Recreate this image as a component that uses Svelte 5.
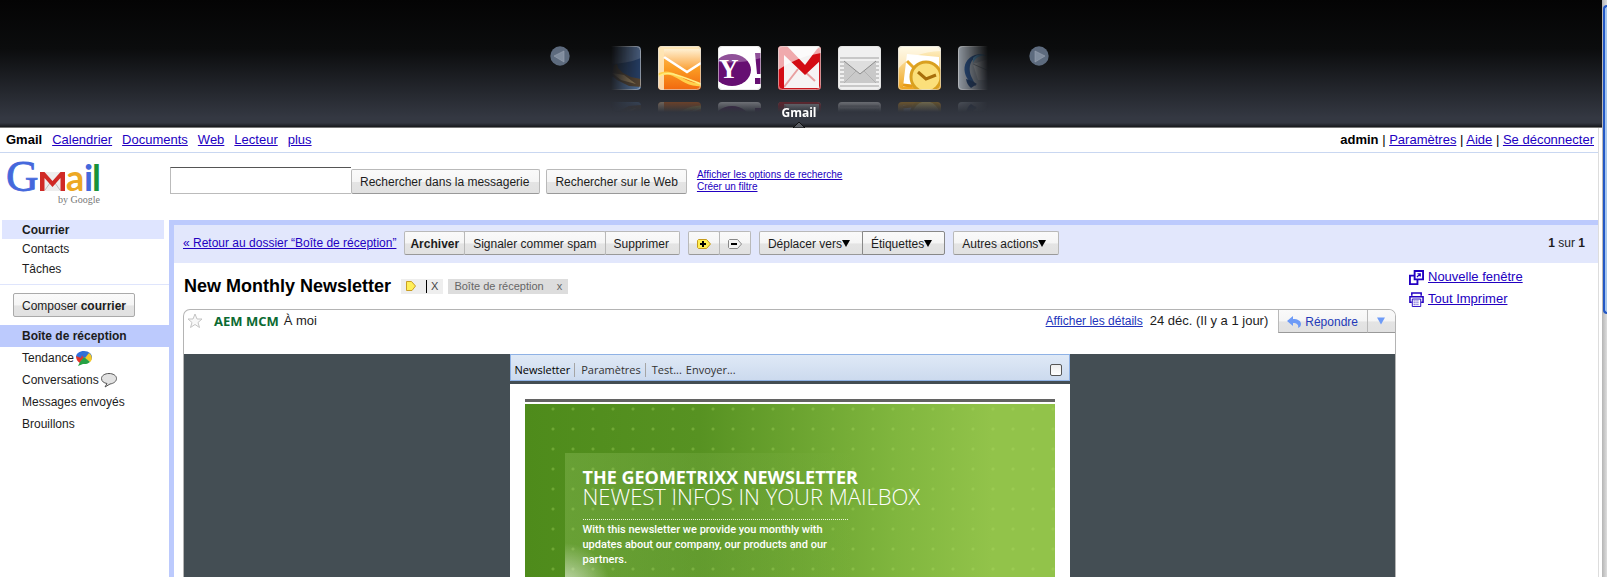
<script>
  const apps = ['photo', 'hotmail', 'yahoo', 'gmail', 'mail', 'outlook', 'bird'];
  const links = ['Calendrier', 'Documents', 'Web', 'Lecteur', 'plus'];
  const folders = [
    { name: 'Tendance', icon: 'buzz' },
    { name: 'Conversations', icon: 'chat' },
    { name: 'Messages envoyés' },
    { name: 'Brouillons' }
  ];
</script>

{#snippet caret()}
  <svg class="caret" viewBox="0 0 8 7" aria-hidden="true"><path d="M0 0h8L4 7z" fill="currentColor" /></svg>
{/snippet}

{#snippet art(name, mirrored)}
  {#if name === 'photo'}
    <rect width="43" height="44" fill="#26416b" />
    <path d="M0 34 20 30 43 37V44H0z" fill="#5478a8" />
    <path d="M3 22 9 24 14 26 16 19 19 18 20 22 25 27 33 31 43 33V41L31 40 19 34 12 28z" fill="#5a4630" />
    <path d="M14 27 26 29 38 38 23 34z" fill="#a3875c" />
    <path d="M0 0H43V12Q24 20 0 17z" fill="#fff" opacity=".18" />
  {:else if name === 'hotmail'}
    <rect width="43" height="44" fill="url(#orange)" />
    <path d="M0 0H43V5L6 8V44H0z" fill="#fff0cc" opacity=".8" />
    <path d="M6 10 29 26 43 17V3H6z" fill="url(#flap)" />
    <path d="M6 11 29 26 43 17" fill="none" stroke="#fff" stroke-width="2.6" />
    <path d="M0 29C10 24 17 29 25 34S37 38 43 39" fill="none" stroke="#ffd04c" stroke-width="3" />
    <path d="M1 30C10 24 20 29 43 38" fill="none" stroke="#ffed83" stroke-width="1.6" />
  {:else if name === 'yahoo'}
    <rect width="43" height="44" fill="#fff" />
    <ellipse cx="14" cy="24" rx="19" ry="16" fill="#660f72" />
    <path d="M37 7h6v21h-4zM37 32h6v6h-6z" fill="#660f72" />
    {#if !mirrored}
      <text x="1" y="32" font-family="Liberation Serif, serif" font-size="27" font-weight="700" fill="#fff">Y</text>
    {/if}
    <path d="M0 0H43V12Q22 18 0 16z" fill="#fff" opacity=".28" />
  {:else if name === 'gmail'}
    <rect width="43" height="44" fill="#f6f3f3" />
    <path d="M6 41 20 23M37 35 25 24" stroke="#e8a0a0" stroke-width="2" />
    <path d="M0 0H9L27 19 39 3 43 0V14L27 29 6 9V44H0z" fill="#d30c14" />
    <path d="M0 42H43V44H0zM41 12 43 8V44H41z" fill="#c9161d" />
    <path d="M0 0H43V7Q18 11 0 24z" fill="#fff" opacity=".65" />
  {:else if name === 'mail'}
    <rect width="43" height="44" fill="#f0f0f0" />
    <path d="M2 12H41M2 16H41M2 20H41M2 24H41M2 28H41M2 32H41M2 36H41M2 40H41" stroke="#c8c8c8" stroke-width="2" />
    <path d="M6 15H38V37H6z" fill="#c9c9c9" />
    <path d="M6 15 22 28 38 15z" fill="#dedede" />
    <path d="M6 15 22 28 38 15" fill="none" stroke="#8c8c8c" />
    <path d="M6 37 18 25M38 37 26 25" stroke="#b2b2b2" />
  {:else if name === 'outlook'}
    <rect width="43" height="44" fill="url(#gold)" />
    <path d="M9 8 41 11V36L5 41z" fill="#fff" />
    <path d="M9 15 16 22" fill="none" stroke="#e8a825" stroke-width="3" />
    <path d="M5 39 14 40" fill="none" stroke="#e69a18" stroke-width="3" />
    <circle cx="28" cy="31" r="15" fill="#fbdf7a" stroke="#d9a020" stroke-width="3" />
    <path d="M20 26 28 33 38 29" fill="none" stroke="#a86f0c" stroke-width="3" />
    <path d="M0 0H43V5Q14 6 0 23z" fill="#fff" opacity=".5" />
  {:else}
    <rect width="43" height="44" fill="#9ba3ac" />
    <path d="M15 18 43 9V34L20 34z" fill="#c4c8cc" />
    <path d="M15 18 31 25 43 10" fill="none" stroke="#7d848d" />
    <path d="M27 8C12 9 9 22 14 32L18 40C1 32 2 6 27 8z" fill="#254b80" />
    <path d="M15 12C18 8 25 7 29 10 22 9 18 11 15 17z" fill="#5598c6" />
    <path d="M8 33Q14 34 19 38L13 42Q9 39 8 33z" fill="#17345f" />
  {/if}
{/snippet}

<svg class="defs" aria-hidden="true">
  <defs>
    <linearGradient id="orange" x2="0" y2="1"><stop stop-color="#ffc463" /><stop offset=".5" stop-color="#fb9d23" /><stop offset="1" stop-color="#f2680f" /></linearGradient>
    <linearGradient id="flap" x2="0" y2="1"><stop stop-color="#fff0d2" /><stop offset="1" stop-color="#fa9826" /></linearGradient>
    <linearGradient id="gold" x2="0" y2="1"><stop stop-color="#fff5cf" /><stop offset="1" stop-color="#efa41d" /></linearGradient>
    <linearGradient id="fade" x2="0" y2="1"><stop stop-color="#fff" stop-opacity=".32" /><stop offset="1" stop-color="#fff" stop-opacity="0" /></linearGradient>
    <clipPath id="tile"><rect width="43" height="44" rx="4" /></clipPath>
    <mask id="mirror" maskUnits="userSpaceOnUse" x="0" y="56" width="43" height="10"><rect y="56" width="43" height="10" fill="url(#fade)" /></mask>
  </defs>
</svg>

<div class="window">
  <div class="page">
    <header class="switcher">
      <button class="arrow" aria-label="Précédent"><svg viewBox="0 0 20 20"><circle cx="10" cy="10" r="9.7" fill="#66758a" /><path d="M4 10 14 5V16z" fill="#8d9bae" stroke="#a9b4c2" stroke-width=".6" /></svg></button>
      <div class="apps">
        {#each apps as app}
          <button class="app" aria-label={app}>
            <svg viewBox="0 0 43 66">
              <g clip-path="url(#tile)">{@render art(app, false)}</g>
              <rect x=".5" y=".5" width="42" height="43" rx="4" fill="none" stroke="#ddd" stroke-opacity=".6" />
              <g mask="url(#mirror)"><g transform="translate(0 100) scale(1 -1)" clip-path="url(#tile)">{@render art(app, true)}</g></g>
            </svg>
            {#if app === 'gmail'}<span class="label">Gmail</span><svg class="pointer" viewBox="0 0 12 6"><path d="M0 6 6 0 12 6z" fill="#5b5e65" stroke="#111" /></svg>{/if}
          </button>
        {/each}
      </div>
      <button class="arrow" aria-label="Suivant"><svg viewBox="0 0 20 20"><circle cx="10" cy="10" r="9.7" fill="#66758a" /><path d="M16 10 6 5V16z" fill="#8d9bae" stroke="#a9b4c2" stroke-width=".6" /></svg></button>
    </header>

    <div class="client">
      <nav class="topnav">
        <b>Gmail</b>
        {#each links as l}<a href="#top">{l}</a>{/each}
        <span class="user"><b>admin</b> | <a href="#top">Paramètres</a> | <a href="#top">Aide</a> | <a href="#top">Se déconnecter</a></span>
      </nav>

      <div class="search">
        <svg class="logo" viewBox="0 0 100 48" role="img" aria-label="Gmail by Google">
          <g font-family="Lato, sans-serif" font-weight="700" font-size="36">
            <text x="4" y="31" font-family="Liberation Serif, serif" font-weight="400" font-size="45" fill="#4468dc" stroke="#4468dc" stroke-width=".8">G</text>
            <text x="64" y="31" fill="#eda824">a</text>
            <text x="82" y="31" fill="#4468dc">i</text>
            <text x="90" y="31" fill="#179339">l</text>
          </g>
          <path d="M39 12H62V31H39z" fill="#eee" />
          <path d="M43 30 48 23M58 30 53 23" stroke="#bbb" />
          <path d="M38 31V12h4.500l8 9 8-9H63v19h-4.500V18l-8 9-8-9v13z" fill="#d02a26" />
          <text x="56" y="43" font-family="Liberation Serif, serif" font-size="10" fill="#777">by Google</text>
        </svg>
        <form onsubmit={(e) => e.preventDefault()}>
          <input type="text" aria-label="Rechercher" />
          <button class="btn find">Rechercher dans la messagerie</button>
          <button class="btn web" type="button">Rechercher sur le Web</button>
        </form>
        <div class="options"><a href="#top">Afficher les options de recherche </a><a href="#top">Créer un filtre</a></div>
      </div>

      <div class="body">
        <aside>
          <nav class="apps-nav">
            <a class="on" href="#top">Courrier</a>
            <a href="#top">Contacts</a>
            <a href="#top">Tâches</a>
          </nav>
          <div class="compose"><button class="btn">Composer&nbsp;<b>courrier</b></button></div>
          <nav class="folders">
            <a class="on" href="#top">Boîte de réception</a>
            {#each folders as f}
              <a href="#top">{f.name}
                {#if f.icon === 'buzz'}
                  <svg viewBox="0 0 16 16"><path d="M8 1C3.500 1 0 3.500 0 7l5 3 4-5z" fill="#2f6fdb" /><path d="M0 6c0 3.500 1.500 5.500 4 7l5-7-3-1-1 3z" fill="#e2362b" /><path d="M8 1c5 0 8 3 8 6.500 0 1-1 3-2 4L6 6z" fill="#3270d3" /><path d="M9 8l4-5c3 2 4 7 1 9z" fill="#f6c927" /><path d="M8 7l6 5c-3 2.500-5 2-7 2l-5 2 2-4z" fill="#26a144" /></svg>
                {:else if f.icon === 'chat'}
                  <svg viewBox="0 0 16 16"><path d="M8 1.500c4 0 7.500 2 7.500 5s-3 5-6.500 5.500l-5 3 2-3.500C3 11 .5 9.500 .5 6.500c0-3 3.500-5 7.500-5z" fill="#e2e2e2" stroke="#555" /></svg>
                {/if}
              </a>
            {/each}
          </nav>
        </aside>

        <main>
          <div class="toolbar">
            <a class="back" href="#top">« Retour au dossier “Boîte de réception”</a>
            <div class="group"><button class="btn archive"><b>Archiver</b></button><button class="btn">Signaler commer spam</button><button class="btn delete">Supprimer</button></div>
            <div class="group">
              <button class="btn tag" aria-label="Ajouter un libellé"><svg viewBox="0 0 14 10"><path d="M1.500 .5h8L13.500 5 9.500 9.500h-8l-1-1v-7z" fill="#ffee52" stroke="#c69a1c" /><path d="M3 5h6M6 2v6" stroke="#000" stroke-width="2" /></svg></button><button class="btn tag" aria-label="Retirer le libellé"><svg viewBox="0 0 14 10"><path d="M1.500 .5h8L13.500 5 9.500 9.500h-8l-1-1v-7z" fill="#f4f4f4" stroke="#888" /><path d="M3 5h6" stroke="#000" stroke-width="2" /></svg></button>
            </div>
            <div class="group menus"><button class="btn">Déplacer vers{@render caret()}</button><button class="btn dark">Étiquettes{@render caret()}</button></div>
            <div class="group menus"><button class="btn">Autres actions{@render caret()}</button></div>
            <span class="count"><b>1</b> sur <b>1</b></span>
          </div>

          <div class="content">
            <div class="thread">
              <div class="subject">
                <h1>New Monthly Newsletter</h1>
                <span class="chip edit"><svg viewBox="0 0 10 10"><path d="M.5.5h5L9.500 5 6 9.500H.5z" fill="#ffef58" stroke="#c99f25" /></svg><span class="bar"></span>X</span>
                <span class="chip">Boîte de réception<span class="x">x</span></span>
              </div>
              <article>
                <div class="head">
                  <svg class="star" viewBox="0 0 16 16"><path d="M8 1l2 5h5l-4 3.500 1.500 5L8 11.500l-4.500 3 1.500-5L1 6h5z" fill="#f8f8f8" stroke="#c4c4c4" /></svg>
                  <b class="from">AEM MCM</b><span class="to">À moi</span>
                  <a class="details" href="#top">Afficher les détails</a>
                  <span class="date">24 déc. (Il y a 1 jour)</span>
                  <div class="reply">
                    <button class="btn"><svg viewBox="0 0 14 12"><path d="M6 0v3c5 0 8 2 8 5 0 2-1 3-3 4 1-3-1-5-5-5v3L0 5z" fill="#6e9bf7" /></svg>Répondre</button><button class="btn more" aria-label="Plus">{@render caret()}</button>
                  </div>
                </div>
                <div class="mail">
                  <div class="sheet">
                    <div class="tabs">
                      <span class="current">Newsletter</span><span>Paramètres</span><span class="test">Test...</span><span class="send">Envoyer...</span>
                      <button class="max" aria-label="Agrandir"></button>
                    </div>
                    <div class="paper">
                      <div class="hero">
                        <div class="dots">
                          <div class="panel">
                            <h2>THE GEOMETRIXX NEWSLETTER</h2>
                            <h3>NEWEST INFOS IN YOUR MAILBOX</h3>
                            <p>With this newsletter we provide you monthly with updates about our company, our products and our partners.</p>
                          </div>
                        </div>
                      </div>
                    </div>
                  </div>
                </div>
              </article>
            </div>
            <div class="actions">
              <a href="#top"><svg viewBox="0 0 16 16"><path d="M5 6H1v9h8v-4M6 1h9v9H6z" fill="none" stroke="currentColor" stroke-width="2" /><path d="M8.500 7.500l3.500-3.500M9 4h3v3" fill="none" stroke="currentColor" stroke-width="1.300" /></svg><span>Nouvelle fenêtre</span></a>
              <a href="#top"><svg viewBox="0 0 16 16"><path d="M3 4V1h10v3M3 11H1V5h14v6h-2" fill="none" stroke="currentColor" stroke-width="1.600" /><path d="M3.500 7.500h9v8h-9z" fill="#fff" stroke="currentColor" /><path d="M5 9.500h6M5 11.500h6M5 13.500h6" stroke="currentColor" stroke-dasharray="1 1" /></svg><span>Tout Imprimer</span></a>
            </div>
          </div>
        </main>
      </div>
    </div>
  </div>
  <div class="scroll"><div class="thumb"></div></div>
</div>

<style>
  :global(body) { margin: 0; background: #fff; }
  .window { display: flex; height: 100vh; overflow: hidden; font: 12px/16px "Liberation Sans", Arial, sans-serif; color: #1c1c1c; }
  .window * { box-sizing: border-box; }
  button { font: inherit; color: inherit; margin: 0; padding: 0; border: 0; background: none; }
  svg { display: block; flex: none; }
  a { color: #2200c1; }
  .defs { position: absolute; width: 0; height: 0; }
  .page { flex: 1; min-width: 0; display: flex; flex-direction: column; }

  .scroll { width: 5px; padding: 5px 0 0 1px; background: linear-gradient(90deg, #b5b5b5, #dedede); }
  .thumb { height: 54%; border: solid #2358c5; border-width: 2px 0 2px 2px; border-radius: 4px 0 0 4px; background: #a4c5ee; }

  .switcher { flex: none; height: 128px; padding: 46px 4px 0 0; display: flex; justify-content: center; gap: 28px; background: linear-gradient(#040404, #0b0c0d 38%, #343842 92%, #343842 96%, #191b1f 99%, #777 99%); }
  .arrow { width: 20px; height: 20px; opacity: .9; }
  .apps { display: flex; gap: 17px; -webkit-mask-image: linear-gradient(90deg, transparent 13px, #000 46px, #000 calc(100% - 46px), transparent calc(100% - 13px)); mask-image: linear-gradient(90deg, transparent 13px, #000 46px, #000 calc(100% - 46px), transparent calc(100% - 13px)); }
  .app { position: relative; width: 43px; height: 82px; display: flex; align-items: flex-start; }
  .app > svg { width: 43px; height: 66px; }
  .label { position: absolute; top: 59px; left: 0; right: 0; text-align: center; font: 700 12px/16px "Open Sans", "Noto Sans", sans-serif; color: #fff; }
  .app > .pointer { position: absolute; width: 12px; height: 6px; left: 15px; bottom: 0; }

  .client { flex: 1; min-height: 0; display: flex; flex-direction: column; margin-right: 3px; border-right: 1px solid #ddd; }
  .topnav { flex: none; height: 25px; padding: 0 4px 1px 6px; display: flex; align-items: center; gap: 10px; font-size: 13px; border-bottom: 1px solid #c9d7f1; color: #000; }
  .user { margin-left: auto; }

  .search { flex: none; height: 67px; display: flex; padding: 7px 0 0 2px; }
  .logo { width: 100px; height: 48px; margin-right: 68px; overflow: visible; }
  form { display: flex; align-items: flex-end; height: 34px; }
  input { width: 181px; height: 27px; padding: 2px 4px; border: 1px solid #bbb; border-top: 1px solid #555; border-right: 0; background: #fff; font: inherit; }
  .btn { height: 25px; padding: 1px 8px 0; display: flex; align-items: center; white-space: nowrap; border: 1px solid #b9b9b9; border-bottom-color: #999; border-radius: 2px; background: linear-gradient(#fafafa, #f5f5f5 50%, #e4e4e4 54%, #e1e1e1); }
  .find { padding-right: 10px; }
  .web { margin-left: 6px; }
  .options { display: flex; flex-direction: column; align-items: flex-start; padding: 9px 0 0 10px; font-size: 10px; line-height: 12px; }

  .body { flex: 1; min-height: 0; display: flex; }
  aside { flex: none; width: 169px; }
  aside a { display: flex; align-items: center; color: #1c1c1c; text-decoration: none; }
  .apps-nav { padding-bottom: 5px; border-bottom: 1px solid #dfe5fc; }
  .apps-nav a { height: 20px; padding-left: 22px; }
  .apps-nav a.on { height: 19px; margin: 0 5px 0 2px; padding-left: 20px; font-weight: 700; background: #dfe5ff; }
  .compose { padding: 8px 13px; }
  .compose .btn { height: 24px; border-color: #aaa; }
  .folders a { height: 22px; padding-left: 22px; gap: 2px; }
  .folders a.on { font-weight: 700; background: #bccafd; }
  .folders svg { width: 16px; height: 16px; }

  main { flex: 1; min-width: 0; display: flex; flex-direction: column; border: solid #bccafd; border-width: 5px 0 0 5px; }
  .toolbar { flex: none; height: 38px; padding: 0 13px 2px 9px; display: flex; align-items: center; background: #e2e7fc; }
  .back { margin-right: 8px; }
  .group { display: flex; margin-right: 8px; }
  .group .btn { height: 24px; padding: 1px 8px 0; }
  .group .archive { padding: 1px 5px 0; }
  .group .delete { padding-right: 10px; }
  .group .btn + .btn { margin-left: -1px; border-radius: 0 2px 2px 0; }
  .group .tag { width: 32px; }
  .tag svg { width: 14px; height: 10px; }
  .menus .btn { padding-right: 12px; }
  .menus .dark { border-color: #888; }
  .caret { width: 8px; height: 7px; color: #000; }
  .count { margin-left: auto; }

  .content { flex: 1; min-height: 0; display: flex; }
  .thread { flex: 1; min-width: 0; display: flex; flex-direction: column; padding-left: 9px; }
  .subject { flex: none; height: 46px; display: flex; align-items: center; padding-left: 1px; }
  h1 { margin: 0 10px 0 0; font-size: 18px; line-height: 22px; color: #000; }
  .chip { height: 15px; padding: 0 6px; display: flex; align-items: center; background: #ddd; color: #666; font-size: 11px; line-height: 15px; }
  .edit { margin-right: 5px; padding: 0 5px; background: #eee; color: #444; }
  .edit svg { width: 10px; height: 10px; }
  .bar { width: 1px; height: 13px; margin: 0 4px 0 10px; background: #000; }
  .x { margin-left: 13px; }
  article { flex: 1; min-height: 0; display: flex; flex-direction: column; border: 1px solid #b4b4b4; border-bottom: 0; border-radius: 7px 7px 0 0; overflow: hidden; }
  .head { flex: none; height: 44px; display: flex; align-items: flex-start; line-height: 22px; }
  .star { width: 16px; height: 16px; margin: 3px 11px 0 3px; }
  .from { color: #0b6a32; font: 700 13px/22px "Open Sans", "Noto Sans", sans-serif; margin-right: 5px; }
  .to, .date { font-size: 13px; }
  .details { margin-left: auto; color: #2233bb; }
  .date { margin: 0 10px 0 7px; }
  .reply { display: flex; }
  .reply .btn { height: 23px; gap: 4px; border-width: 0 0 1px 1px; border-radius: 0; color: #2339b8; }
  .reply .btn:first-child { padding-right: 9px; }
  .reply .btn svg { width: 14px; height: 12px; }
  .reply .more { padding: 0 10px 0 9px; }
  .reply .more .caret { width: 8px; height: 8px; color: #6e9bf7; }
  .mail { flex: 1; min-height: 0; display: flex; justify-content: center; background: #444e54; }
  .sheet { width: 560px; display: flex; flex-direction: column; }
  .tabs { flex: none; height: 27px; padding: 4px 7px 0 4px; display: flex; align-items: center; border: 1px solid #8fb2e5; background: linear-gradient(#dfe9f6, #ccdaee); font: 11px/14px "Open Sans", "Noto Sans", sans-serif; color: #333; }
  .tabs span { padding: 0 4px 0 6px; border-left: 1px solid #a5a5a5; }
  .tabs .current { padding: 0 4px 0 0; border: 0; color: #000; }
  .tabs .send { padding: 0; border: 0; }
  .max { width: 12px; height: 12px; margin-left: auto; border: 1px solid #555; border-radius: 2px; background: linear-gradient(#eee, #fff); }
  .paper { flex: 1; min-height: 0; margin-top: 3px; padding: 15px 15px 0; display: flex; background: #fff; }
  .hero { flex: 1; padding-left: 18px; display: flex; border-top: 3px solid #636363; background: linear-gradient(#fff, #fff) 0 0 / 100% 2px no-repeat, linear-gradient(90deg, #4e8b1b, #579222 33%, #80b63e 70%, #92c34a 88%, #92c34a); }
  .dots { flex: 1; padding: 51px 0 0 22px; background: radial-gradient(circle at 10px 7px, rgba(175, 220, 100, .32) 1px, transparent 2px) 0 0 / 20px 20px; }
  .panel { height: 160px; padding: 15px 0 0 18px; background: radial-gradient(circle at 0 136px, rgba(255, 255, 255, .65), transparent 46px), linear-gradient(90deg, rgba(160, 205, 110, .3), transparent 290px); color: #fff; }
  h2, h3 { margin: 0; font-family: "Open Sans", "Noto Sans", sans-serif; white-space: nowrap; }
  h2 { font-size: 18px; line-height: 19px; font-weight: 700; }
  h3 { font-size: 22px; line-height: 19px; font-weight: 300; }
  .panel p { width: 265px; margin: 13px 0 0; padding-top: 2px; border-top: 1px dotted #e8f3d8; font: 500 11px/15px Roboto, sans-serif; }

  .actions { flex: none; width: 202px; padding: 3px 0 0 13px; font-size: 13px; }
  .actions a { height: 22px; display: flex; align-items: center; gap: 4px; text-decoration: none; }
  .actions span { text-decoration: underline; }
  .actions svg { width: 15px; height: 15px; }
</style>
